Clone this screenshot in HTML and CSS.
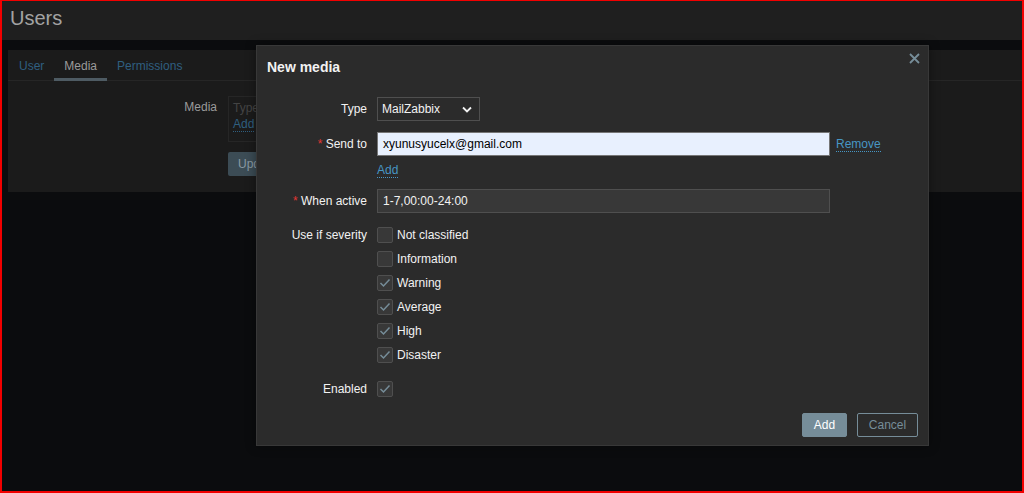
FILE: index.html
```html
<!DOCTYPE html>
<html>
<head>
<meta charset="utf-8">
<link rel="stylesheet" href="styles.css">
</head>
<body>
<div class="frame">
  <header class="page-header"><h1 class="page-title">Users</h1></header>
  <div class="band"></div>
  <section class="panel">
    <nav class="tabs">
      <span class="tab link">User</span>
      <span class="tab active">Media</span>
      <span class="tab link">Permissions</span>
    </nav>
    <div class="bg-form">
      <div class="bg-row">
        <div class="bg-label">Media</div>
        <div class="bg-field">
          <div class="bg-box">
            <div class="bg-ph">Type</div>
            <div class="bg-add">Add</div>
          </div>
          <div class="bg-btn">Update</div>
        </div>
      </div>
    </div>
  </section>
  <div class="rest"></div>

  <div class="dialog">
    <div class="dlg-head">
      <h2 class="dlg-title">New media</h2>
      <svg class="close" width="11" height="11" viewBox="0 0 11 11"><path d="M1 1L10 10M10 1L1 10" stroke="#768d99" stroke-width="1.8" fill="none"/></svg>
    </div>
    <div class="dlg-form">
      <div class="row r-type">
        <div class="label">Type</div>
        <div class="field">
          <div class="select">MailZabbix
            <svg class="chev" width="10" height="7" viewBox="0 0 10 7"><path d="M1 1.5L5 5.5L9 1.5" stroke="#f2f2f2" stroke-width="1.8" fill="none"/></svg>
          </div>
        </div>
      </div>
      <div class="row r-send">
        <div class="label"><span class="req">*</span> Send to</div>
        <div class="field">
          <div class="inline">
            <div class="input autofill">xyunusyucelx@gmail.com</div>
            <span class="link-dotted remove">Remove</span>
          </div>
          <span class="link-dotted add-link">Add</span>
        </div>
      </div>
      <div class="row r-active">
        <div class="label"><span class="req">*</span> When active</div>
        <div class="field"><div class="input dark">1-7,00:00-24:00</div></div>
      </div>
      <div class="row r-sev">
        <div class="label">Use if severity</div>
        <div class="field checks">
          <label class="check"><span class="box"></span>Not classified</label>
          <label class="check"><span class="box"></span>Information</label>
          <label class="check"><span class="box on"><svg width="12" height="10" viewBox="0 0 12 10"><path d="M1.5 5L4.5 8L10.5 1.5" stroke="#768d99" stroke-width="1.5" fill="none"/></svg></span>Warning</label>
          <label class="check"><span class="box on"><svg width="12" height="10" viewBox="0 0 12 10"><path d="M1.5 5L4.5 8L10.5 1.5" stroke="#768d99" stroke-width="1.5" fill="none"/></svg></span>Average</label>
          <label class="check"><span class="box on"><svg width="12" height="10" viewBox="0 0 12 10"><path d="M1.5 5L4.5 8L10.5 1.5" stroke="#768d99" stroke-width="1.5" fill="none"/></svg></span>High</label>
          <label class="check"><span class="box on"><svg width="12" height="10" viewBox="0 0 12 10"><path d="M1.5 5L4.5 8L10.5 1.5" stroke="#768d99" stroke-width="1.5" fill="none"/></svg></span>Disaster</label>
        </div>
      </div>
      <div class="row r-enabled">
        <div class="label">Enabled</div>
        <div class="field"><span class="box on"><svg width="12" height="10" viewBox="0 0 12 10"><path d="M1.5 5L4.5 8L10.5 1.5" stroke="#768d99" stroke-width="1.5" fill="none"/></svg></span></div>
      </div>
    </div>
    <div class="dlg-foot">
      <button class="btn primary">Add</button>
      <button class="btn alt">Cancel</button>
    </div>
  </div>
</div>
</body>
</html>
```

FILE: styles.css
```css
* { box-sizing: border-box; }
html, body { margin: 0; padding: 0; background: #0b0c0e; }
body { font-family: "Liberation Sans", Arial, sans-serif; font-size: 12px; }
.frame {
  position: relative;
  width: 1024px;
  height: 493px;
  border: 2px solid #f20000;
  border-top-width: 1px;
  background: #0b0c0e;
  overflow: hidden;
  display: flex;
  flex-direction: column;
}
.page-header {
  height: 39px;
  background: #1f1f1f;
  padding: 5px 0 0 8px;
}
.page-title {
  margin: 0;
  font-weight: normal;
  font-size: 20px;
  line-height: 24px;
  color: #a3a3a3;
}
.band { height: 10px; background: #0b0c0e; }
.panel {
  margin-left: 6px;
  height: 142px;
  background: #1b1b1b;
}
.tabs {
  display: flex;
  height: 31px;
  border-bottom: 1px solid #262626;
  padding-left: 1px;
}
.tab {
  padding: 9px 10px 0;
  line-height: 15px;
  font-size: 12px;
  color: #9a9a9a;
}
.tab.link { color: #2f5f80; }
.tab.active { border-bottom: 3px solid #4e5b63; margin-bottom: -1px; }
.bg-form { padding-top: 15px; }
.bg-row { display: flex; }
.bg-label {
  width: 209px;
  text-align: right;
  color: #9a9a9a;
  padding-top: 4px;
  line-height: 14px;
}
.bg-field { margin-left: 11px; }
.bg-box {
  width: 300px;
  height: 46px;
  border: 1px solid #262626;
  padding: 3px 4px;
  line-height: 16px;
}
.bg-ph { color: #444; }
.bg-add { color: #2f5f80; border-bottom: 1px dotted #2f5f80; display: inline-block; line-height: 13px; }
.bg-btn {
  margin-top: 10px;
  width: 70px;
  height: 24px;
  background: #3c4c55;
  border-radius: 2px;
  color: #8a9aa3;
  line-height: 24px;
  padding-left: 10px;
}
.rest { flex: 1; }

.dialog {
  position: absolute;
  left: 254px;
  top: 44px;
  width: 673px;
  height: 401px;
  background: #2b2b2b;
  border: 1px solid #383838;
  box-shadow: 0 0 10px rgba(0,0,0,0.4);
  padding: 0 10px;
}
.dlg-head {
  display: flex;
  justify-content: space-between;
  align-items: flex-start;
  padding-top: 13px;
  height: 51px;
}
.dlg-title {
  margin: 0;
  font-size: 14px;
  line-height: 16px;
  font-weight: bold;
  color: #f2f2f2;
}
.close { margin-top: -6px; margin-right: -2px; }
.dlg-form { color: #f2f2f2; }
.row { display: flex; }
.label {
  width: 100px;
  text-align: right;
  line-height: 24px;
  flex: none;
}
.req { color: #e33734; }
.field { margin-left: 10px; display: flex; flex-direction: column; align-items: flex-start; }
.r-type { margin-bottom: 11px; }
.r-send { margin-bottom: 11px; }
.r-active { margin-bottom: 14px; }
.r-sev .label { line-height: 16px; }
.r-sev { margin-bottom: 18px; }
.r-enabled .label { line-height: 16px; }
.select {
  width: 103px;
  height: 24px;
  border: 1px solid #4f4f4f;
  background: #2b2b2b;
  line-height: 22px;
  padding-left: 4px;
  position: relative;
  color: #f2f2f2;
}
.chev { position: absolute; right: 7px; top: 8px; }
.inline { display: flex; align-items: center; }
.input {
  width: 453px;
  height: 24px;
  border: 1px solid #4f4f4f;
  line-height: 22px;
  padding-left: 5px;
}
.input.autofill { background: #e8f0fe; color: #000; border-color: #767676; }
.input.dark { background: #383838; color: #f2f2f2; }
.link-dotted {
  color: #4796c4;
  border-bottom: 1px dotted #4796c4;
  line-height: 13px;
}
.remove { margin-left: 6px; margin-top: 1px; }
.add-link { margin-top: 8px; }
.checks { gap: 8px; }
.check { display: flex; align-items: center; line-height: 16px; }
.box {
  width: 16px;
  height: 16px;
  border: 1px solid #4f4f4f;
  background: #383838;
  border-radius: 2px;
  margin-right: 4px;
  display: inline-flex;
  align-items: center;
  justify-content: center;
  flex: none;
}
.dlg-foot {
  display: flex;
  justify-content: flex-end;
  gap: 10px;
  margin-top: 16px;
  padding-right: 0;
}
.btn {
  height: 24px;
  font-family: "Liberation Sans", Arial, sans-serif;
  font-size: 12px;
  border-radius: 2px;
  padding: 0 10px;
}
.btn.primary { background: #768d99; border: 1px solid #768d99; color: #ffffff; width: 45px; }
.btn.alt { background: transparent; border: 1px solid #768d99; color: #768d99; width: 61px; }
```
